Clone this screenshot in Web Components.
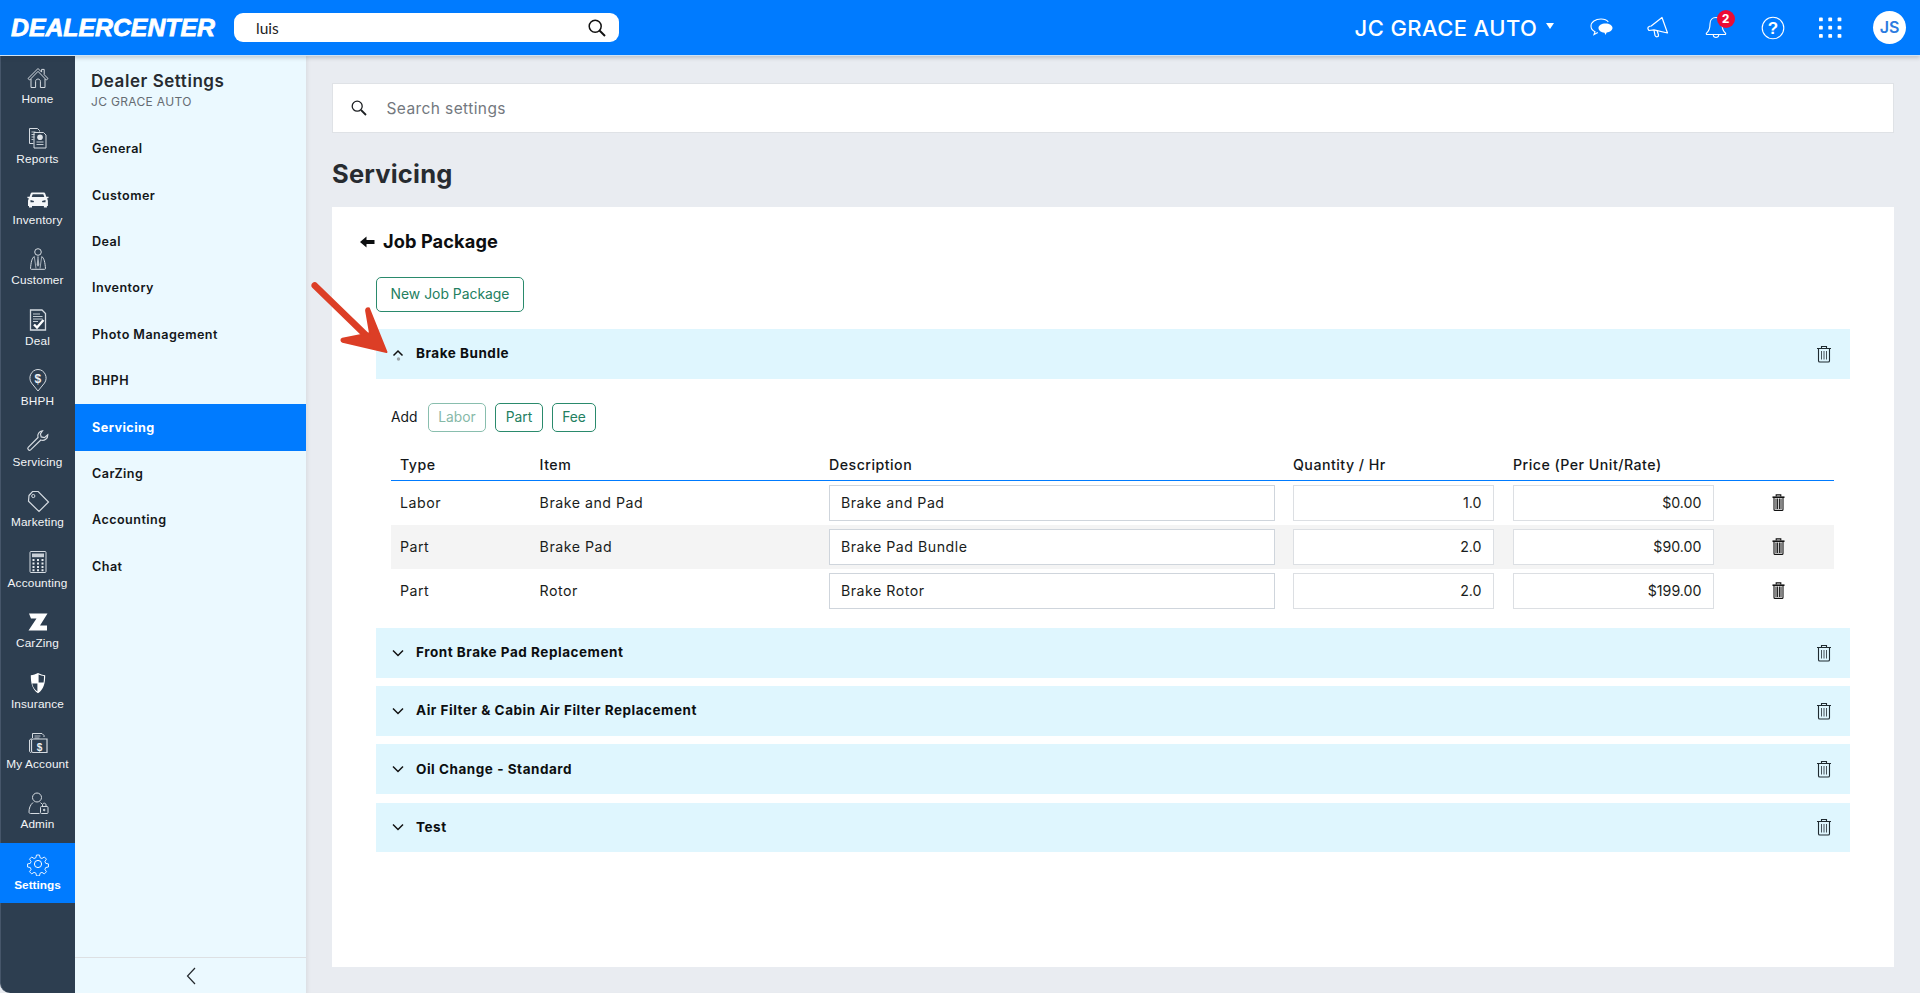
<!DOCTYPE html>
<html>
<head>
<meta charset="utf-8">
<title>Dealer Settings</title>
<style>
  html, body { margin: 0; height: 100%; }
  body { background: #e9ecf1; font-family: Inter, "Liberation Sans", sans-serif; overflow: hidden; }
  dc-layout { height: 993px; }
</style>
</head>
<body>
<dc-layout>
  <dc-header slot="top"></dc-header>
  <dc-rail slot="rail">
    <rail-item icon="home">Home</rail-item>
    <rail-item icon="reports">Reports</rail-item>
    <rail-item icon="car">Inventory</rail-item>
    <rail-item icon="person">Customer</rail-item>
    <rail-item icon="deal">Deal</rail-item>
    <rail-item icon="pin">BHPH</rail-item>
    <rail-item icon="wrench">Servicing</rail-item>
    <rail-item icon="tag">Marketing</rail-item>
    <rail-item icon="calc">Accounting</rail-item>
    <rail-item icon="z">CarZing</rail-item>
    <rail-item icon="shield">Insurance</rail-item>
    <rail-item icon="account">My Account</rail-item>
    <rail-item icon="admin">Admin</rail-item>
    <rail-item icon="gear" active>Settings</rail-item>
  </dc-rail>
  <settings-menu slot="menu">
    <menu-link>General</menu-link>
    <menu-link>Customer</menu-link>
    <menu-link>Deal</menu-link>
    <menu-link>Inventory</menu-link>
    <menu-link>Photo Management</menu-link>
    <menu-link>BHPH</menu-link>
    <menu-link active>Servicing</menu-link>
    <menu-link>CarZing</menu-link>
    <menu-link>Accounting</menu-link>
    <menu-link>Chat</menu-link>
  </settings-menu>
  <settings-search></settings-search>
  <page-title>Servicing</page-title>
  <job-card>
    <job-bar name="Brake Bundle" open>
      <add-row></add-row>
      <job-table>
        <job-line type="Labor" item="Brake and Pad" desc="Brake and Pad" qty="1.0" price="$0.00"></job-line>
        <job-line type="Part" item="Brake Pad" desc="Brake Pad Bundle" qty="2.0" price="$90.00" shaded></job-line>
        <job-line type="Part" item="Rotor" desc="Brake Rotor" qty="2.0" price="$199.00"></job-line>
      </job-table>
    </job-bar>
    <job-bar name="Front Brake Pad Replacement"></job-bar>
    <job-bar name="Air Filter &amp; Cabin Air Filter Replacement"></job-bar>
    <job-bar name="Oil Change - Standard"></job-bar>
    <job-bar name="Test"></job-bar>
  </job-card>
</dc-layout>

<script>
const trashOutline = `<svg width="16" height="18" viewBox="0 0 16 18" fill="none" stroke="#1f2a30" stroke-width="1.100">
  <path d="M1 3.500h14M5.500 3.500V1.500h5v2M2.500 3.500v12.200c0 .8.500 1.300 1.300 1.300h8.400c.8 0 1.300-.5 1.300-1.300V3.500"/>
  <path d="M5.500 6v8.500M8 6v8.500M10.500 6v8.500" stroke-width=".8"/></svg>`;

const trashSolid = `<svg width="13" height="17" viewBox="0 0 13 17" fill="none" stroke="#111">
  <path d="M.5 3.200h12" stroke-width="1.600"/><path d="M4.200 2.500V.9h4.600v1.600" stroke-width="1.100"/>
  <path d="M2 4v11.400c0 .6.400 1 1 1h7c.6 0 1-.4 1-1V4" stroke-width="1.100"/>
  <path d="M4 4.500V15M5.600 4.500V15M7.400 4.500V15M9 4.500V15" stroke-width="1"/></svg>`;

const ICONS = {
  home: `<path d="M2 12.500 12 2.500l3.600 3.600V3.400h2.600v5.300l3.800 3.800-1.600 1.500L12 5.400 3.600 14z"/><path d="M5 13v8.500h4.600v-6.200c0-3 4.800-3 4.800 0v6.200H19V13"/>`,
  reports: `<path d="M3.500 2.500h8l2 2v1M3.500 2.500v15h4"/><path d="M5.500 6h4M5.500 8.500h3M5.500 11h3M5.500 13.500h2" stroke-width=".9"/>
    <path d="M8 6.500h9.500l2.500 2.500v13H8z"/><circle cx="14" cy="11.300" r="2.800" fill="#dfe4e9" stroke="none"/><path d="M10.500 16h7M10.500 18.500h7" stroke-width=".9"/>`,
  car: `<path fill="#f4f6f8" stroke="none" d="M6.500 5.500h11c.9 0 1.500.5 1.800 1.200l1 3h2.200v1.400l-1.600.5c.7.7 1 1.500 1 2.400V19h-1v1.500h-3V19H6v1.500H3V19H2v-5c0-.9.3-1.700 1-2.400l-1.600-.5V9.700h2.200l1-3c.3-.7.9-1.200 1.900-1.200zm.2 1.700-1 2.900h12.600l-1-2.900zM4.500 13v2.200h3.200l.3-1.200zm15 0-3.500 1 .3 1.200h3.200z"/>`,
  person: `<circle cx="12" cy="5" r="3.300"/><path d="M8.300 9.500C5.800 11 5 15.500 4.500 21.500c0 .5.300.8.800.8h13.400c.5 0 .8-.3.800-.8-.5-6-1.300-10.500-3.800-12"/><path fill="#aeb7c0" stroke="none" d="M11.200 9.500h1.600l-.2 1.800.8 6.700-1.400 1.800-1.400-1.800.8-6.700z"/><path d="M8.300 9.500 10 21.500M15.700 9.500 14 21.500" stroke-width=".7"/>`,
  deal: `<path d="M4.500 2h11.500l3.500 3.500V22h-15z" stroke-width="1.300"/><path d="M7 6h7M7 8.500h9.500M7 11h9.500M7 13.500h5" stroke-width=".9"/><path d="m8 16.500 3 3 6.500-7.500" stroke="#fff" stroke-width="2.400"/>`,
  pin: `<path d="M12 23 5.500 15C1.500 9.500 5.500 1.500 12 1.500s10.500 8 6.500 13.500z"/><text x="12" y="14.500" font-size="12" font-weight="700" font-family="Liberation Sans, sans-serif" text-anchor="middle" fill="#eef1f4" stroke="none">$</text>`,
  wrench: `<path d="M16.500 1.800c-3.200.3-5.500 3.300-4.500 6.700L2.200 18.400c-1.300 1.400.8 3.800 2.400 2.500L14.800 11c3.500 1.200 7.200-1.400 7-5.300l-3.400 3-3.200-.8-.8-3z" stroke-width="1.200"/>`,
  tag: `<path d="M3 6.500 6.500 2.500h5.700L22.500 13 13 22.500 2.500 12.300z" stroke-width="1.200"/><circle cx="7.300" cy="7" r="1.600"/>`,
  calc: `<rect x="4" y="1.500" width="16" height="21" rx="1"/><rect x="6" y="3.500" width="12" height="3.700" fill="#c9d0d7" stroke="none"/><path d="M6.500 10h2M11 10h2M15.500 10h2M6.500 13.500h2M11 13.500h2M15.500 13.500h2M6.500 17h2M11 17h2M15.500 17h2M6.500 20.200h2M11 20.200h2M15.500 20.200h2" stroke="#e6eaee" stroke-width="2"/>`,
  z: `<path fill="#fff" stroke="none" d="M3 3.500H21.500L14 15.500H21V20.500H2.500L10.500 8.500H5z"/>`,
  shield: `<path fill="#fff" stroke="none" d="M12 2c2.300 1.300 4.700 2 7.200 2.200 0 7.500-1.200 14-7.200 18-6-4-7.200-10.500-7.200-18C7.300 4 9.700 3.300 12 2z"/><path fill="#2d3e50" stroke="none" d="M12.600 3.500c1.700.8 3.400 1.300 5.400 1.500 0 2.300-.1 4.500-.4 6.500h-5zM11.400 12.500H6.200c.5 3 1.900 5.800 5.200 8z"/>`,
  account: `<path d="M6.500 7V2.500H16l2 2V6"/><path d="M8.500 5h6M8.500 7h5" stroke-width=".8"/><path d="M5.500 7.500 3.500 9V20c0 1 .7 1.500 1.500 1.500"/><path d="M7 8h14v13.500H7c-1 0-1.500-.5-1.500-1.500V9.500C5.500 8.500 6 8 7 8z" stroke-width="1.200"/><text x="13.500" y="19.500" font-size="10" font-weight="700" font-family="Liberation Sans, sans-serif" text-anchor="middle" fill="#eef1f4" stroke="none">$</text>`,
  admin: `<circle cx="11" cy="6.500" r="4.500"/><path d="M7 11.500C4 14 3 17.500 3 21c0 1 .5 1.500 1.500 1.500h9"/><path d="M14.500 11.700c.6.400 1 .7 1.500 1.200"/><rect x="14.500" y="15.500" width="7.500" height="7" rx="1"/><path d="M16.500 15.500v-1.500c0-2.400 3.500-2.400 3.500 0v1.500"/><circle cx="18.200" cy="19" r=".8" fill="#dfe4e9"/>`,
  gear: `<circle cx="12" cy="12" r="3.600"/><path d="M10.300 2h3.400l.6 3 2.100.9 2.600-1.700 2.400 2.400-1.700 2.600.9 2.100 3 .6v3.400l-3 .6-.9 2.100 1.700 2.600-2.400 2.400-2.600-1.700-2.100.9-.6 3h-3.400l-.6-3-2.100-.9-2.600 1.700-2.400-2.400 1.700-2.600-.9-2.100-3-.6v-3.400l3-.6.9-2.100-1.700-2.600 2.400-2.400 2.600 1.700 2.100-.9z" transform="translate(1.200 1.200) scale(.9)" stroke-linejoin="round"/>`
};

class DcLayout extends HTMLElement {
  constructor() {
    super();
    this.attachShadow({ mode: 'open' });
    this.shadowRoot.innerHTML = `
      <style>
        :host { display: flex; flex-direction: column; }
        .body { flex: 1; display: flex; min-height: 0; }
        main { flex: 1; padding: 27px 26px 26px 26px; display: flex; flex-direction: column; min-width: 0; box-shadow: inset 4px 0 4px -3px rgba(0,0,0,.08); }
      </style>
      <slot name="top"></slot>
      <div class="body">
        <slot name="rail"></slot>
        <slot name="menu"></slot>
        <main><slot></slot></main>
      </div>`;
  }
}

class DcHeader extends HTMLElement {
  constructor() {
    super();
    this.attachShadow({ mode: 'open' });
    const dots = [1.5, 9.8, 18].map((y) => [1, 10.3, 19.6].map((x) =>
      `<rect x="${x}" y="${y}" width="3.800" height="3.800" rx=".9"/>`).join('')).join('');
    this.shadowRoot.innerHTML = `
      <style>
        :host { display: flex; align-items: center; height: 55px; background: #007bff; border-bottom: 1px solid #cfe3f5; box-shadow: 0 2px 4px rgba(40,50,70,.22); position: relative; z-index: 2; color: #fff; }
        .logo { margin-left: 11px; width: 204px; font: italic 700 24.800px "Liberation Sans", sans-serif; -webkit-text-stroke: .8px #fff; white-space: nowrap; }
        .search { margin-left: 19px; width: 385px; height: 29px; box-sizing: border-box; background: #fff; border-radius: 9px; display: flex; align-items: center; justify-content: space-between; padding: 0 13px 0 22px; color: #222; font: 400 15.500px Lato, sans-serif; }
        .account { margin-left: auto; font: 500 22px Inter, sans-serif; letter-spacing: .4px; white-space: nowrap; }
        .caret { margin-left: 8.500px; width: 0; height: 0; border: 4.500px solid transparent; border-top: 6px solid #fff; border-bottom: 0; transform: translateY(-2px); }
        .icons { display: flex; align-items: center; margin-left: 35.500px; margin-right: 14px; }
        .i { position: relative; display: flex; justify-content: center; align-items: center; width: 24px; height: 26px; margin-right: 33.200px; }
        .badge { position: absolute; left: 13px; top: -5px; width: 18px; height: 18px; border-radius: 50%; background: #ec0c34; font: 800 11.500px/18px Inter, sans-serif; text-align: center; }
        .avatar { width: 33px; height: 33px; border-radius: 50%; background: #fff; color: #2b7be0; font: 600 16px/33px Inter, sans-serif; text-align: center; margin-left: 31px; }
        svg.q text { font: 700 17px "Liberation Sans", sans-serif; }
      </style>
      <div class="logo">DEALERCENTER</div>
      <div class="search"><span>luis</span>
        <svg width="18" height="18" viewBox="0 0 18 18" fill="none" stroke="#111" stroke-width="1.500"><circle cx="7.200" cy="7.200" r="6"/><path d="m11.500 11.500 5.500 5.500" stroke-width="1.900"/></svg>
      </div>
      <div class="account">JC GRACE AUTO</div>
      <div class="caret"></div>
      <div class="icons">
        <div class="i"><svg width="23" height="20" viewBox="0 0 23 20" fill="none" stroke="#fff" stroke-width="1.100"><path d="M11 1C5.500 1 1 3.800 1 8c0 2.800 1.800 4.700 4 5.800L4 16.500l3.800-2"/><path fill="#fff" stroke="none" d="M15.500 5.500c-4 0-7 1.800-7 4.600 0 2.600 2.700 4.500 6 4.600l1 2.300 1.200-2.400c3.300-.4 5.800-2.200 5.800-4.500 0-2.800-3-4.600-7-4.600z"/><path d="M18.300 4C17 2.200 14.500 1 11 1"/></svg></div>
        <div class="i"><svg width="22" height="24" viewBox="0 0 22 24" fill="none" stroke="#fff" stroke-width="1.200" stroke-linejoin="round"><path d="M15 1.500 20.500 17 7 13.800 2 14.500c-1-1-1.500-2.200-.8-3.300.8-.7 2-1.200 3-1.200z"/><path d="M7 14l1 5.500c1.200 2 3.700 1.500 3.500-.5l-1.400-4.500"/></svg></div>
        <div class="i"><svg width="22" height="25" viewBox="0 0 22 25" fill="none" stroke="#fff" stroke-width="1.100"><path d="M11 2.500c-4 0-6 3-6 6.500 0 3.500-1 7-3.500 9.200-.6.800 0 1.300.6 1.300h17.800c.6 0 1.200-.5.600-1.300-2.500-2.200-3.500-5.700-3.500-9.200 0-3.500-2-6.500-6-6.500z"/><path d="M8.300 19.700c-.3 3.600 5.700 3.600 5.400 0"/></svg><span class="badge">2</span></div>
        <div class="i"><svg class="q" width="24" height="24" viewBox="0 0 24 24" fill="none" stroke="#fff" stroke-width="1.100"><circle cx="12" cy="12" r="10.800"/><text x="12" y="18" text-anchor="middle" fill="#fff" stroke="none">?</text></svg></div>
        <div class="i" style="margin-right:0"><svg width="24" height="23" viewBox="0 0 24 23" fill="#fff">${dots}</svg></div>
        <div class="avatar">JS</div>
      </div>`;
  }
}

class DcRail extends HTMLElement {
  constructor() {
    super();
    this.attachShadow({ mode: 'open' });
    this.shadowRoot.innerHTML = `
      <style>
        :host { display: grid; grid-auto-rows: 60.460px; align-content: start; box-sizing: border-box; flex: none; width: 75px; padding-top: 1px; background: #2d3e50; border-left: 1px solid #46566a; border-bottom-left-radius: 10px; }
      </style>
      <slot></slot>`;
  }
}

class RailItem extends HTMLElement {
  constructor() {
    super();
    this.attachShadow({ mode: 'open' });
    this.shadowRoot.innerHTML = `
      <style>
        :host { display: flex; flex-direction: column; align-items: center; margin-left: -1px; padding-top: 9px; box-sizing: border-box; color: #f3f5f7; font: 500 11.800px/13px "Liberation Sans", Arial, sans-serif; letter-spacing: .15px; white-space: nowrap; }
        :host([active]) { background: #007bff; color: #fff; font-weight: 700; letter-spacing: 0; }
        svg { width: 24px; height: 24px; margin-bottom: 3px; fill: none; stroke: #d5dbe1; stroke-width: 1; }
        :host([active]) svg { stroke: #fff; }
      </style>
      <svg viewBox="0 0 24 24">${ICONS[this.getAttribute('icon')]}</svg>
      <slot></slot>`;
  }
}

class SettingsMenu extends HTMLElement {
  constructor() {
    super();
    this.attachShadow({ mode: 'open' });
    this.shadowRoot.innerHTML = `
      <style>
        :host { display: flex; flex-direction: column; flex: none; width: 231px; background: #ebf9ff; box-sizing: border-box; }
        .head { padding: 15px 16px 0; height: 70px; box-sizing: border-box; }
        h2 { margin: 0; font: 600 17px/20px Inter, sans-serif; color: #272b30; letter-spacing: .55px; white-space: nowrap; }
        small { display: block; margin-top: 4px; font: 400 12px/14px Inter, sans-serif; color: #666c72; letter-spacing: .33px; }
        .list { flex: 1; }
        .foot { height: 35px; border-top: 1px solid #dde0e3; display: flex; align-items: center; justify-content: center; }
      </style>
      <div class="head"><h2>Dealer Settings</h2><small>JC GRACE AUTO</small></div>
      <div class="list"><slot></slot></div>
      <div class="foot"><svg width="10" height="18" viewBox="0 0 10 18" fill="none" stroke="#23282d" stroke-width="1.200"><path d="M9 1 1.500 9 9 17"/></svg></div>`;
  }
}

class MenuLink extends HTMLElement {
  constructor() {
    super();
    this.attachShadow({ mode: 'open' });
    this.shadowRoot.innerHTML = `
      <style>
        :host { display: flex; align-items: center; box-sizing: border-box; height: 46.400px; padding: 0 0 1px 17px; font: 600 12.600px Inter, sans-serif; letter-spacing: .45px; color: #14171a; }
        :host([active]) { background: #007bff; color: #fff; font-weight: 700; }
      </style>
      <slot></slot>`;
  }
}

class SettingsSearch extends HTMLElement {
  constructor() {
    super();
    this.attachShadow({ mode: 'open' });
    this.shadowRoot.innerHTML = `
      <style>
        :host { display: flex; align-items: center; height: 50px; box-sizing: border-box; background: #fff; border: 1px solid #dfe2e6; padding-left: 18px; color: #73787e; font: 400 15.500px Inter, sans-serif; letter-spacing: .4px; }
        svg { margin-right: 19.500px; }
      </style>
      <svg width="16" height="16" viewBox="0 0 16 16" fill="none" stroke="#1c1f22" stroke-width="1.300"><circle cx="6.200" cy="6.200" r="5"/><path d="m10 10 5 5" stroke-width="1.800"/></svg>
      <span>Search settings</span>`;
  }
}

class PageTitle extends HTMLElement {
  constructor() {
    super();
    this.attachShadow({ mode: 'open' });
    this.shadowRoot.innerHTML = `
      <style>
        :host { display: block; height: 74px; box-sizing: border-box; padding-top: 24px; font: 700 25.500px/34px Inter, sans-serif; letter-spacing: .2px; color: #272b30; }
      </style>
      <slot></slot>`;
  }
}

class JobCard extends HTMLElement {
  constructor() {
    super();
    this.attachShadow({ mode: 'open' });
    this.shadowRoot.innerHTML = `
      <style>
        :host { display: block; position: relative; height: 760px; box-sizing: border-box; background: #fff; padding: 23px 44px 0 28px; }
        .title { display: flex; align-items: center; box-sizing: border-box; height: 24px; padding-bottom: 1px; font: 700 18.200px/23px Inter, sans-serif; letter-spacing: .1px; color: #0c0e10; }
        .title svg { margin-right: 8px; }
        .inner { margin-left: 16px; }
        button { display: block; margin: 23px 0 17px; width: 148px; height: 35px; background: #fff; border: 1px solid #2a8a6c; border-radius: 5px; color: #23805f; font: 400 13.900px Inter, sans-serif; padding: 0 0 1px; }
        .arrow { position: absolute; left: -27px; top: 68px; overflow: visible; }
      </style>
      <div class="title">
        <svg width="15" height="12" viewBox="0 0 15 12" fill="#0c0e10"><path d="M0 6 6.500 .5v3.500h8v4h-8v3.500z"/></svg>
        Job Package
      </div>
      <div class="inner">
        <button>New Job Package</button>
        <slot></slot>
      </div>
      <svg class="arrow" width="90" height="85" viewBox="305 275 90 85" fill="#dc3e26">
        <path d="M312.300 287.700c-1.400-1.400-1.300-3.500.2-4.800 1.400-1.100 3.400-1.100 4.600.3l56 54.200-4.500 5z"/>
        <path stroke="#dc3e26" stroke-width="2" stroke-linejoin="round" d="M386.500 352 369 308.500c-1.500-.8-3 .3-2.900 2.200l3.900 22.500-27.500 5.500c-1.600.5-1.300 2.400.2 3z"/>
      </svg>`;
  }
}

class JobBar extends HTMLElement {
  constructor() {
    super();
    this.attachShadow({ mode: 'open' });
    const open = this.hasAttribute('open');
    const chevron = open
      ? `<svg width="12" height="14" viewBox="0 0 12 14" fill="none"><path d="m1.500 8.500 4.500-4.500 4.500 4.500" stroke="#111" stroke-width="1.500"/><circle cx="6.500" cy="12" r="1.700" fill="#9aa3a8"/></svg>`
      : `<svg width="12" height="14" viewBox="0 0 12 14" fill="none"><path d="m1 4.500 5 5 5-5" stroke="#111" stroke-width="1.500"/></svg>`;
    this.shadowRoot.innerHTML = `
      <style>
        :host { display: block; margin-bottom: 8.600px; }
        .bar { display: flex; align-items: center; height: 49.600px; padding: 0 18px 0 16px; background: #dff6fe; font: 700 13.500px Inter, sans-serif; letter-spacing: .53px; color: #0c0e10; }
        .bar span { padding-bottom: 1px; }
        .bar svg:first-child { margin-right: 12px; }
        .bar svg:last-child { margin-left: auto; }
        .content { padding: 24.400px 0 6.400px; }
      </style>
      <div class="bar">${chevron}<span>${this.getAttribute('name').replace(/&/g, '&amp;')}</span>${trashOutline}</div>
      ${open ? '<div class="content"><slot></slot></div>' : ''}`;
  }
}

class AddRow extends HTMLElement {
  constructor() {
    super();
    this.attachShadow({ mode: 'open' });
    this.shadowRoot.innerHTML = `
      <style>
        :host { display: flex; align-items: center; height: 29px; padding-left: 15px; font: 400 13.800px Inter, sans-serif; color: #14171a; }
        span { width: 37px; }
        b { font-weight: 400; box-sizing: border-box; height: 29px; line-height: 27px; text-align: center; border: 1px solid #2a8a6c; border-radius: 5px; color: #23805f; margin-right: 9px; }
        .off { opacity: .55; }
      </style>
      <span>Add</span>
      <b class="off" style="width:58px">Labor</b>
      <b style="width:48px">Part</b>
      <b style="width:44px">Fee</b>`;
  }
}

class JobTable extends HTMLElement {
  constructor() {
    super();
    this.attachShadow({ mode: 'open' });
    this.shadowRoot.innerHTML = `
      <style>
        :host { display: block; margin: 0 16px 0 15px; --cols: 148.600px 289.400px 464px 220px 202.500px 1fr; }
        .head { display: grid; grid-template-columns: var(--cols); align-items: center; height: 32px; margin-top: 17px; box-sizing: border-box; border-bottom: 1.500px solid #007bff; font: 500 14.200px Inter, sans-serif; letter-spacing: .48px; color: #14171a; white-space: nowrap; }
        .head div:first-child { padding-left: 9px; }
      </style>
      <div class="head"><div>Type</div><div>Item</div><div>Description</div><div>Quantity / Hr</div><div>Price (Per Unit/Rate)</div><div></div></div>
      <slot></slot>`;
  }
}

class JobLine extends HTMLElement {
  constructor() {
    super();
    this.attachShadow({ mode: 'open' });
    const a = (n) => this.getAttribute(n);
    this.shadowRoot.innerHTML = `
      <style>
        :host { display: grid; grid-template-columns: var(--cols); align-items: center; height: 44px; font: 400 14.200px Inter, sans-serif; letter-spacing: .5px; color: #1a1d20; }
        :host([shaded]) { background: #f4f4f4; }
        .first { padding-left: 9px; }
        .field { box-sizing: border-box; height: 35.500px; line-height: 33px; background: #fff; border: 1px solid #dcdfe3; padding: 0 12px 0 11px; }
        .desc { width: 446px; border-color: #cfd5dc; }
        .num { width: 201.500px; text-align: right; letter-spacing: 0; }
        .trash { display: flex; justify-content: center; padding-left: 8px; }
      </style>
      <div class="first">${a('type')}</div>
      <div>${a('item')}</div>
      <div class="field desc">${a('desc')}</div>
      <div class="field num">${a('qty')}</div>
      <div class="field num">${a('price')}</div>
      <div class="trash">${trashSolid}</div>`;
  }
}

customElements.define('dc-layout', DcLayout);
customElements.define('dc-header', DcHeader);
customElements.define('dc-rail', DcRail);
customElements.define('rail-item', RailItem);
customElements.define('settings-menu', SettingsMenu);
customElements.define('menu-link', MenuLink);
customElements.define('settings-search', SettingsSearch);
customElements.define('page-title', PageTitle);
customElements.define('job-card', JobCard);
customElements.define('job-bar', JobBar);
customElements.define('add-row', AddRow);
customElements.define('job-table', JobTable);
customElements.define('job-line', JobLine);
</script>
</body>
</html>
